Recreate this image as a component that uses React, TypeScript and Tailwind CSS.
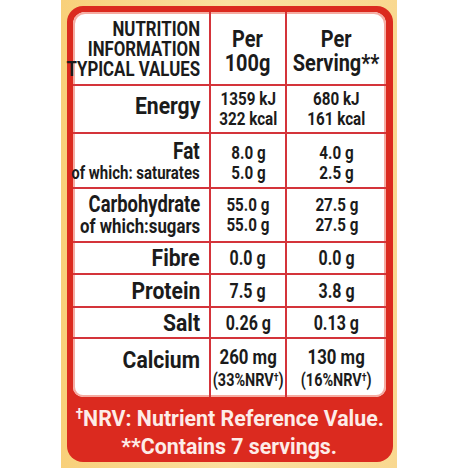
const font = "font-['Roboto','Liberation_Sans',sans-serif]"

type Row = {
  h: string
  label: React.ReactNode
  a: React.ReactNode
  b: React.ReactNode
}

const L = 'whitespace-nowrap scale-x-[0.88] origin-right text-right'
const C = 'whitespace-nowrap scale-x-[0.8] origin-center text-center'

const rows: Row[] = [
  {
    h: 'h-[74px]',
    label: (
      <div className="whitespace-nowrap scale-x-[0.84] origin-right text-right text-[20px] leading-[20px] uppercase pt-[2px]">
        <div>Nutrition</div>
        <div>Information</div>
        <div>Typical Values</div>
      </div>
    ),
    a: (
      <div className="whitespace-nowrap scale-x-[0.83] origin-center text-center text-[24px] leading-[24px] pt-[6px]">
        <div>Per</div>
        <div>100g</div>
      </div>
    ),
    b: (
      <div className="whitespace-nowrap scale-x-[0.83] origin-center text-center text-[24px] leading-[24px] pt-[6px]">
        <div>Per</div>
        <div>Serving**</div>
      </div>
    ),
  },
  {
    h: 'h-[48px]',
    label: <div className={`${L} text-[24px] pb-[6px]`}>Energy</div>,
    a: (
      <div className={`${C} text-[19px] leading-[20px]`}>
        <div>1359 kJ</div>
        <div>322 kcal</div>
      </div>
    ),
    b: (
      <div className={`${C} text-[19px] leading-[20px]`}>
        <div>680 kJ</div>
        <div>161 kcal</div>
      </div>
    ),
  },
  {
    h: 'h-[55px]',
    label: (
      <div className="whitespace-nowrap scale-x-[0.79] origin-right text-right">
        <div className="text-[24px] leading-[24px]">Fat</div>
        <div className="text-[19px] leading-[20px]">of which: saturates</div>
      </div>
    ),
    a: (
      <div className={`${C} text-[19px] leading-[20px] pt-[4px]`}>
        <div>8.0 g</div>
        <div>5.0 g</div>
      </div>
    ),
    b: (
      <div className={`${C} text-[19px] leading-[20px] pt-[4px]`}>
        <div>4.0 g</div>
        <div>2.5 g</div>
      </div>
    ),
  },
  {
    h: 'h-[54px]',
    label: (
      <div className="whitespace-nowrap scale-x-[0.8] origin-right text-right">
        <div className="text-[23px] leading-[23px]">Carbohydrate</div>
        <div className="text-[21px] leading-[21px]">of which:sugars</div>
      </div>
    ),
    a: (
      <div className={`${C} text-[19px] leading-[20px]`}>
        <div>55.0 g</div>
        <div>55.0 g</div>
      </div>
    ),
    b: (
      <div className={`${C} text-[19px] leading-[20px]`}>
        <div>27.5 g</div>
        <div>27.5 g</div>
      </div>
    ),
  },
  {
    h: 'h-[32px]',
    label: <div className={`${L} text-[24px]`}>Fibre</div>,
    a: <div className={`${C} text-[20px]`}>0.0 g</div>,
    b: <div className={`${C} text-[20px]`}>0.0 g</div>,
  },
  {
    h: 'h-[33px]',
    label: <div className={`${L} text-[24px]`}>Protein</div>,
    a: <div className={`${C} text-[20px]`}>7.5 g</div>,
    b: <div className={`${C} text-[20px]`}>3.8 g</div>,
  },
  {
    h: 'h-[31px]',
    label: <div className={`${L} text-[24px]`}>Salt</div>,
    a: <div className={`${C} text-[20px]`}>0.26 g</div>,
    b: <div className={`${C} text-[20px]`}>0.13 g</div>,
  },
  {
    h: 'h-[58px]',
    label: <div className={`${L} text-[24px] pb-[16px]`}>Calcium</div>,
    a: (
      <div className={C}>
        <div className="text-[21px] leading-[24px]">260 mg</div>
        <div className="text-[18px] leading-[22px]">
          (33%NRV<sup className="text-[11px]">†</sup>)
        </div>
      </div>
    ),
    b: (
      <div className={C}>
        <div className="text-[21px] leading-[24px]">130 mg</div>
        <div className="text-[18px] leading-[22px]">
          (16%NRV<sup className="text-[11px]">†</sup>)
        </div>
      </div>
    ),
  },
]

export default function App() {
  return (
    <div className={`w-[468px] h-[468px] bg-white pl-[61px] ${font} font-bold`}>
      <div className="w-[336px] h-[468px] bg-gradient-to-r from-[#f8d07a] via-[#fbe0a0] to-[#f9d890] pl-[6px] pt-[6px]">
        <div className="w-[326px] h-[456px] rounded-[16px] bg-[#db2a1f] pl-[6px] pt-[6px] pr-[7px] flex flex-col">
          <div className="bg-white rounded-t-[12px] rounded-b-[10px] shadow-[inset_0_0_0_2px_#f5aca2] grid grid-cols-[138px_76px_99px] text-[#1b1b1b]">
            {rows.map((r, i) => {
              const last = i === rows.length - 1
              const bb = last ? '' : 'border-b-2 border-[#d4343a]'
              return (
                <div key={i} className="contents">
                  <div className={`${r.h} ${bb} border-r-2 border-[#d4343a] flex flex-col justify-center items-end pr-[9px]`}>
                    {r.label}
                  </div>
                  <div className={`${r.h} ${bb} border-r-2 border-[#d4343a] flex flex-col justify-center items-center`}>
                    {r.a}
                  </div>
                  <div className={`${r.h} ${bb} flex flex-col justify-center items-center`}>
                    {r.b}
                  </div>
                </div>
              )
            })}
          </div>
          <div className="flex-1 flex flex-col items-center justify-center text-[#fdece8] text-[22px] leading-[28px] pt-[6px]">
            <div className="whitespace-nowrap scale-x-[0.97] origin-center">
              <sup className="text-[14px]">†</sup>NRV: Nutrient Reference Value.
            </div>
            <div className="whitespace-nowrap scale-x-[0.97] origin-center">**Contains 7 servings.</div>
          </div>
        </div>
      </div>
    </div>
  )
}
